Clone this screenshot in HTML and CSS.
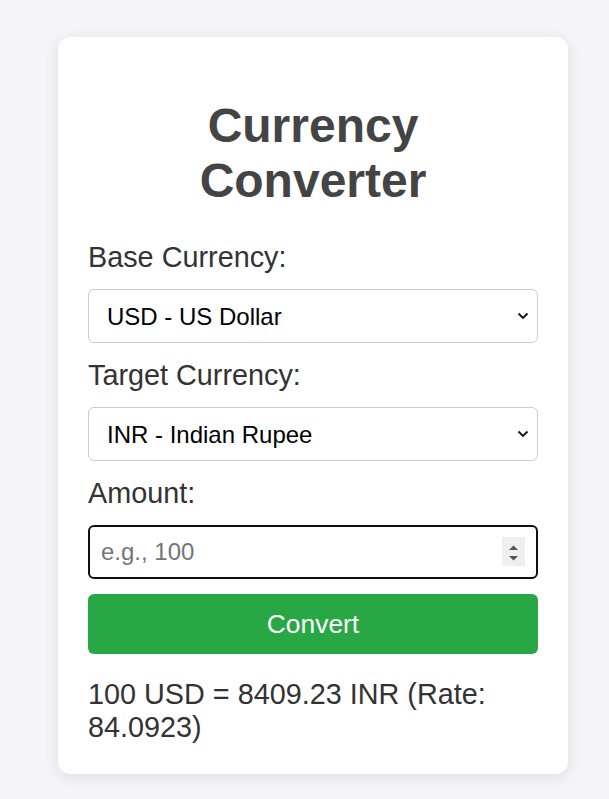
FILE: index.html
```html
<!DOCTYPE html>
<html lang="en">
<head>
<meta charset="utf-8">
<title>Currency Converter</title>
<link rel="stylesheet" href="styles.css">
</head>
<body>
<div class="card">
  <h1 class="title">Currency Converter</h1>

  <label class="field-label" for="base">Base Currency:</label>
  <div class="select-wrap">
    <select id="base" class="select">
      <option>USD - US Dollar</option>
    </select>
    <svg class="chevron" width="12" height="8" viewBox="0 0 12 8"><path d="M1.5 1.5 L6 6 L10.5 1.5" fill="none" stroke="#111" stroke-width="1.8"/></svg>
  </div>

  <label class="field-label" for="target">Target Currency:</label>
  <div class="select-wrap">
    <select id="target" class="select">
      <option>INR - Indian Rupee</option>
    </select>
    <svg class="chevron" width="12" height="8" viewBox="0 0 12 8"><path d="M1.5 1.5 L6 6 L10.5 1.5" fill="none" stroke="#111" stroke-width="1.8"/></svg>
  </div>

  <label class="field-label" for="amount">Amount:</label>
  <div class="input-wrap">
    <input id="amount" class="amount" type="text" placeholder="e.g., 100">
    <span class="spinner">
      <svg width="23" height="29" viewBox="0 0 23 29"><path d="M7 13 L11.5 8.5 L16 13 Z" fill="#555"/><path d="M7 19 L16 19 L11.5 23.5 Z" fill="#555"/></svg>
    </span>
  </div>

  <button class="convert" type="button">Convert</button>

  <div class="result">100 USD = 8409.23 INR (Rate: 84.0923)</div>
</div>
</body>
</html>
```

FILE: styles.css
```css
html, body {
  margin: 0;
  padding: 0;
}

body {
  background: #f4f4f9;
  font-family: "Liberation Sans", Arial, sans-serif;
  padding: 37px 0 26px 58px;
}

.card {
  box-sizing: border-box;
  width: 510px;
  padding: 30px;
  background: #ffffff;
  border-radius: 12px;
  box-shadow: 0 3px 15px rgba(0, 0, 0, 0.1);
}

.title {
  margin: 31px 0 32px;
  font-size: 48px;
  font-weight: bold;
  text-align: center;
  color: #444444;
  line-height: normal;
}

.field-label {
  display: block;
  font-size: 28.8px;
  line-height: 34px;
  color: #333333;
  margin-bottom: 15px;
}

.select-wrap,
.input-wrap {
  position: relative;
  margin-bottom: 15px;
}

.select {
  display: block;
  box-sizing: border-box;
  width: 100%;
  height: 54px;
  padding: 0 30px 0 18px;
  font-family: "Liberation Sans", Arial, sans-serif;
  font-size: 24px;
  color: #000000;
  background: #ffffff;
  border: 1px solid #cccccc;
  border-radius: 6px;
  appearance: none;
  -webkit-appearance: none;
}

.chevron {
  position: absolute;
  right: 9px;
  top: 23px;
}

.amount {
  display: block;
  box-sizing: border-box;
  width: 100%;
  height: 54px;
  padding: 0 40px 0 11px;
  font-family: "Liberation Sans", Arial, sans-serif;
  font-size: 24px;
  color: #000000;
  background: #ffffff;
  border: 2px solid #101010;
  border-radius: 6px;
  outline: none;
}

.amount::placeholder {
  color: #757575;
}

.spinner {
  position: absolute;
  right: 13px;
  top: 12px;
  width: 23px;
  height: 29px;
  background: #efefef;
  display: block;
}

.spinner svg {
  display: block;
}

.convert {
  display: block;
  box-sizing: border-box;
  width: 100%;
  height: 60px;
  padding: 0;
  margin: 0;
  border: none;
  border-radius: 6px;
  background: #28a745;
  color: #ffffff;
  font-family: "Liberation Sans", Arial, sans-serif;
  font-size: 26.4px;
}

.result {
  margin-top: 24px;
  font-size: 28.8px;
  color: #333333;
  line-height: normal;
}
```
